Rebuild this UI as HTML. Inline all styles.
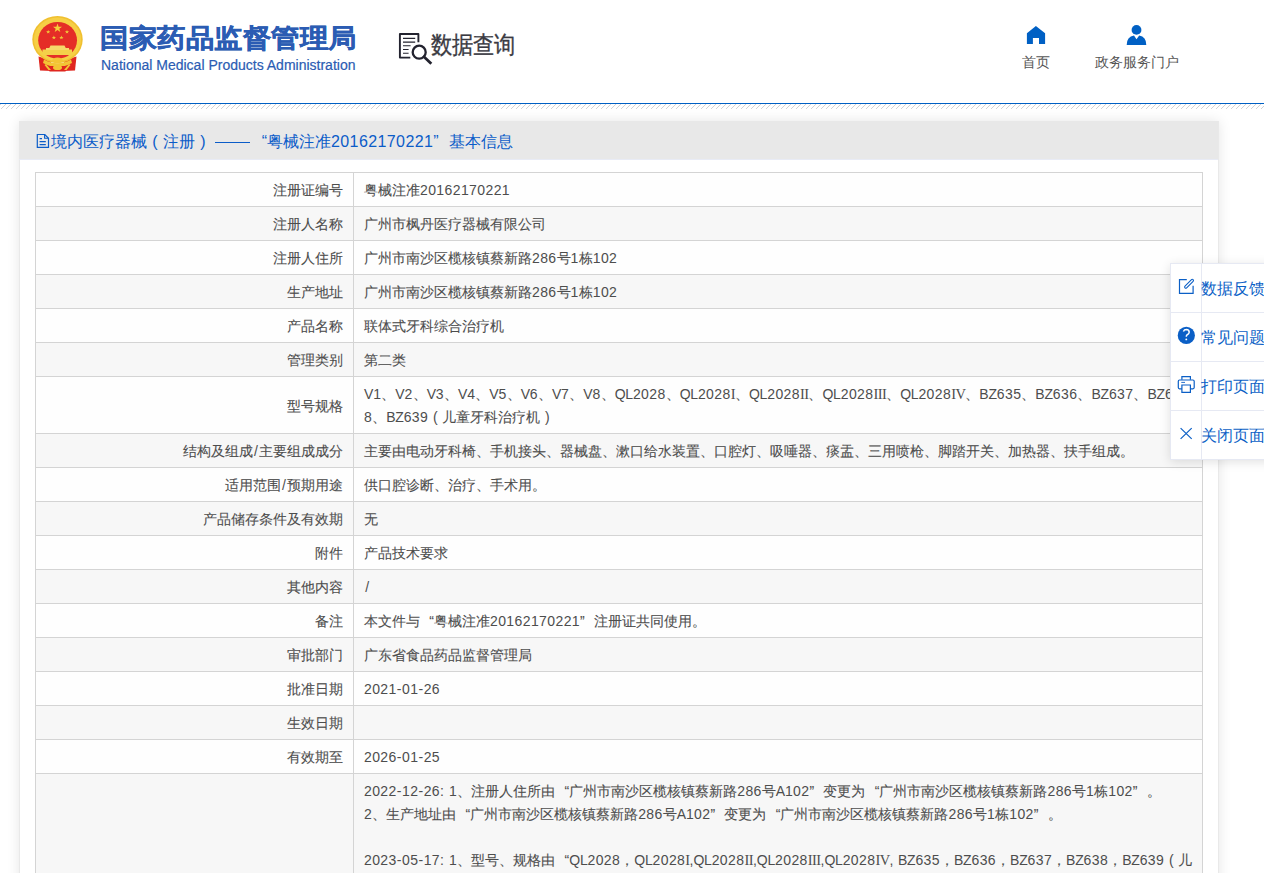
<!DOCTYPE html>
<html><head><meta charset="utf-8">
<style>
*{margin:0;padding:0;box-sizing:border-box}
html,body{width:1264px;height:873px;overflow:hidden;background:#fff;font-family:"Liberation Sans",sans-serif}
#hdr{position:absolute;left:0;top:0;width:1264px;height:103px;background:#fff}
#bl{position:absolute;left:0;top:103px;width:1264px;height:1px;background:#0060c4}
#hatch{position:absolute;left:0;top:104px;width:1264px;height:5px}
#emb{position:absolute;left:28px;top:12px;width:60px;height:62px}
#t1{position:absolute;left:100px;top:21px;font-size:28px;font-weight:bold;color:#2b5cb3;white-space:nowrap;letter-spacing:0.5px;transform:scaleY(0.92);transform-origin:0 4px;-webkit-text-stroke:0.5px #2b5cb3}
#t2{position:absolute;left:101px;top:57px;font-size:14px;color:#2b5cb3;white-space:nowrap;-webkit-text-stroke:0.2px #2b5cb3}
#sq{position:absolute;left:396px;top:30px;width:38px;height:36px}
#sqt{position:absolute;left:431px;top:29px;font-size:21px;color:#3a3a42;white-space:nowrap;transform:scaleY(1.13);transform-origin:0 0;-webkit-text-stroke:0.3px #3a3a42}
.nav{position:absolute;top:54px;font-size:14px;color:#555;white-space:nowrap}
.ico{position:absolute}
#box{position:absolute;left:19px;top:121px;width:1200px;height:900px;background:#fff;border:1px solid #e9e9e9;box-shadow:0 0 12px rgba(0,0,0,.1)}
#bar{position:absolute;left:-1px;top:-1px;width:1199px;height:39px;background:#e8e8e8;border-bottom:1px solid #e8ebf5;color:#0b5cc8;font-size:16px;white-space:nowrap}
#bar>span{position:absolute;top:11px}
.fp{display:inline-block;width:16px;text-align:center}
table{position:absolute;left:15px;top:50px;width:1168px;border-collapse:collapse;table-layout:fixed;font-size:14px;color:#4d4d4d;-webkit-text-stroke:0.1px #4d4d4d}
td{border:1px solid #d4d4d4;background:#fefefe;padding:6px 10px 4px;line-height:23px;vertical-align:middle;white-space:nowrap}
td.l{text-align:right;width:318px}
tr:nth-child(even) td{background:#f7f7f7}
i{font-style:normal;-webkit-text-stroke:0}
.fw{display:inline-block;width:14px;text-align:center;-webkit-text-stroke:0}
.d{letter-spacing:0.4px}
.a{letter-spacing:-0.2px}
.r{letter-spacing:-0.6px;font-family:"Liberation Serif",serif;font-size:14.5px}
.h{letter-spacing:0.6px}
.p{letter-spacing:0px}
.s{margin:0 1.2px}
.lq,.rq{display:inline-block;width:14px}
.lq{text-align:right}
.rq{text-align:left}
#side{position:absolute;left:1170px;top:263px;width:120px;height:197px;background:#fff;border:1px solid #e6e9f3;box-shadow:0 2px 10px rgba(0,0,0,.12)}
#sin{position:absolute;left:-1px;top:-1px;width:120px;height:197px}
.si{position:absolute;left:0;width:120px;height:49px}
.hl{position:absolute;left:0;width:120px;height:1px;background:#e6e9f3}
.si .tx{position:absolute;left:31px;top:16px;font-size:16px;color:#0b5fc6;white-space:nowrap}
#sdiv{position:absolute;left:31px;top:0;width:1px;height:196px;background:#e6e9f3}
</style></head><body>
<div id="hdr">
  <svg id="emb" viewBox="28 12 60 62">
    <path d="M38.5 56.5 L50.5 60 L52 71 L40 70.5 Z" fill="#e0261f"/>
    <path d="M76.5 56.5 L64.5 60 L63 71 L75 70.5 Z" fill="#e0261f"/>
    <ellipse cx="57.5" cy="39.5" rx="25.2" ry="23.5" fill="#f0c030"/>
    <ellipse cx="57.5" cy="39.5" rx="23.5" ry="22" fill="#f6cf45"/>
    <ellipse cx="57.6" cy="40.3" rx="19.4" ry="18.4" fill="#e52d27"/>
    <path d="M44 59.5 Q57.5 67 71 59.5 L72 63 Q57.5 71 43 63 Z" fill="#f3c535"/>
    <path d="M48 66 H67 L65.5 71.5 H49.5 Z" fill="#e0261f"/>
    <ellipse cx="57.5" cy="60.5" rx="5.5" ry="3" fill="#f3c535"/>
    <ellipse cx="57.5" cy="67.5" rx="4.5" ry="2.6" fill="#f3c535"/>
    <path d="M46 64 L51 70 L48.5 70 L44.5 65 Z M69 64 L64 70 L66.5 70 L70.5 65 Z" fill="#f3c535"/>
    <polygon points="57.5,23.5 58.6,26.8 62,26.8 59.3,28.8 60.3,32 57.5,30 54.7,32 55.7,28.8 53,26.8 56.4,26.8" fill="#f5d03a"/>
    <polygon points="48.2,29.9 48.8,31.3 50.3,31.3 49.1,32.2 49.5,33.6 48.2,32.7 46.9,33.6 47.3,32.2 46.1,31.3 47.6,31.3" fill="#f0c93a"/>
    <polygon points="67,29.9 67.6,31.3 69.1,31.3 67.9,32.2 68.3,33.6 67,32.7 65.7,33.6 66.1,32.2 64.9,31.3 66.4,31.3" fill="#f0c93a"/>
    <polygon points="53.9,35.6 54.5,37 56,37 54.8,37.9 55.2,39.3 53.9,38.4 52.6,39.3 53,37.9 51.8,37 53.3,37" fill="#f0c93a"/>
    <polygon points="61.4,35.6 62,37 63.5,37 62.3,37.9 62.7,39.3 61.4,38.4 60.1,39.3 60.5,37.9 59.3,37 60.8,37" fill="#f0c93a"/>
    <path d="M50.5 45.5 H64.5 L66 48.5 H49 Z" fill="#f6d86a"/>
    <rect x="42.5" y="49.5" width="29.5" height="5.5" fill="#f4d04a"/>
    <rect x="46" y="48" width="23" height="2" fill="#f6d86a"/>
  </svg>
  <div id="t1">国家药品监督管理局</div>
  <div id="t2">National Medical Products Administration</div>
  <svg id="sq" viewBox="396 30 38 36">
    <path d="M418.4 42.3 V34 H399.9 V57.6 H410.3" fill="none" stroke="#23232f" stroke-width="1.9" stroke-linejoin="round"/>
    <path d="M403 38.4 H415.2 M403 42.1 H415.2 M403 45.8 H410.6 M403 49.5 H408.6 M403 53.2 H408.6" stroke="#23232f" stroke-width="1.1"/>
    <circle cx="419.2" cy="52.2" r="6.5" fill="#fff" stroke="#23232f" stroke-width="2.3"/>
    <path d="M424.2 57 L430.3 62.8" stroke="#23232f" stroke-width="2.8" stroke-linecap="square"/>
  </svg>
  <div id="sqt">数据查询</div>
  <svg class="ico" style="left:1020px;top:20px" width="30" height="30" viewBox="1020 20 30 30"><path d="M1026.9 33.2 L1035.9 25.9 L1045.1 33.2 V44 H1039 V38 H1032.9 V44 H1026.9 Z" fill="#0060c4"/></svg>
  <svg class="ico" style="left:1120px;top:20px" width="32" height="30" viewBox="1120 20 32 30"><circle cx="1136.5" cy="29.9" r="4.9" fill="#0060c4"/><path d="M1126.7 44.9 Q1126.7 36.5 1134 35.4 L1136.5 39.2 L1139.2 35.4 Q1146.3 36.5 1146.3 44.9 Z" fill="#0060c4"/></svg>
  <div class="nav" style="left:1022px">首页</div>
  <div class="nav" style="left:1095px">政务服务门户</div>
</div>
<div id="bl"></div>
<svg id="hatch" width="1264" height="5"><defs><pattern id="hp" x="1" width="5" height="5" patternUnits="userSpaceOnUse"><path d="M0 5L5 0" stroke="#cfcfcf" stroke-width="0.9"/></pattern></defs><rect width="1264" height="5" fill="url(#hp)"/></svg>
<div id="box">
  <div id="bar">
    <svg style="position:absolute;left:17px;top:12px" width="14" height="16" viewBox="36 133 14 16"><path d="M37.3 134.5 H44.8 L48.5 138.3 V147.3 H37.3 Z" fill="none" stroke="#0b5cc8" stroke-width="1.2"/><path d="M44.6 134.5 V138.3 H48.5" fill="none" stroke="#0b5cc8" stroke-width="1.1"/><path d="M39.6 138.6 H42 M39.6 141.6 H45.8 M39.6 144.6 H45.8" stroke="#0b5cc8" stroke-width="1.2"/></svg>
    <span style="left:32px">境内医疗器械<span class="fp" style="position:static">(</span>注册<span class="fp" style="position:static">)</span></span>
    <div style="position:absolute;left:196px;top:21px;width:35px;height:1.3px;background:#0b5cc8"></div>
    <span style="left:232px"><span class="lq" style="width:16px">“</span>粤械注准<i class="d">20162170221</i><span class="rq" style="width:16px">”</span>基本信息</span>
  </div>
  <table>
<tr><td class="l">注册证编号</td><td>粤械注准<i class="d">20162170221</i></td></tr>
<tr><td class="l">注册人名称</td><td>广州市枫丹医疗器械有限公司</td></tr>
<tr><td class="l">注册人住所</td><td>广州市南沙区榄核镇蔡新路<i class="d">286</i>号<i class="d">1</i>栋<i class="d">102</i></td></tr>
<tr><td class="l">生产地址</td><td>广州市南沙区榄核镇蔡新路<i class="d">286</i>号<i class="d">1</i>栋<i class="d">102</i></td></tr>
<tr><td class="l">产品名称</td><td>联体式牙科综合治疗机</td></tr>
<tr><td class="l">管理类别</td><td>第二类</td></tr>
<tr><td class="l">型号规格</td><td><i class="a">V</i><i class="d">1</i>、<i class="a">V</i><i class="d">2</i>、<i class="a">V</i><i class="d">3</i>、<i class="a">V</i><i class="d">4</i>、<i class="a">V</i><i class="d">5</i>、<i class="a">V</i><i class="d">6</i>、<i class="a">V</i><i class="d">7</i>、<i class="a">V</i><i class="d">8</i>、<i class="a">QL</i><i class="d">2028</i>、<i class="a">QL</i><i class="d">2028</i><i class="r">I</i>、<i class="a">QL</i><i class="d">2028</i><i class="r">II</i>、<i class="a">QL</i><i class="d">2028</i><i class="r">III</i>、<i class="a">QL</i><i class="d">2028</i><i class="r">IV</i>、<i class="a">BZ</i><i class="d">635</i>、<i class="a">BZ</i><i class="d">636</i>、<i class="a">BZ</i><i class="d">637</i>、<i class="a">BZ</i><i class="d">63</i><br><i class="d">8</i>、<i class="a">BZ</i><i class="d">639</i><span class="fw">(</span>儿童牙科治疗机<span class="fw">)</span></td></tr>
<tr><td class="l">结构及组成<i class="s">/</i>主要组成成分</td><td>主要由电动牙科椅、手机接头、器械盘、漱口给水装置、口腔灯、吸唾器、痰盂、三用喷枪、脚踏开关、加热器、扶手组成。</td></tr>
<tr><td class="l">适用范围<i class="s">/</i>预期用途</td><td>供口腔诊断、治疗、手术用。</td></tr>
<tr><td class="l">产品储存条件及有效期</td><td>无</td></tr>
<tr><td class="l">附件</td><td>产品技术要求</td></tr>
<tr><td class="l">其他内容</td><td><i class="s">/</i></td></tr>
<tr><td class="l">备注</td><td>本文件与<span class="lq">“</span>粤械注准<i class="d">20162170221</i><span class="rq">”</span>注册证共同使用。</td></tr>
<tr><td class="l">审批部门</td><td>广东省食品药品监督管理局</td></tr>
<tr><td class="l">批准日期</td><td><i class="d">2021</i><i class="h">-</i><i class="d">01</i><i class="h">-</i><i class="d">26</i></td></tr>
<tr><td class="l">生效日期</td><td></td></tr>
<tr><td class="l">有效期至</td><td><i class="d">2026</i><i class="h">-</i><i class="d">01</i><i class="h">-</i><i class="d">25</i></td></tr>
<tr><td class="l"></td><td><i class="d">2022</i><i class="h">-</i><i class="d">12</i><i class="h">-</i><i class="d">26</i><i class="h">: </i><i class="d">1</i>、注册人住所由<span class="lq">“</span>广州市南沙区榄核镇蔡新路<i class="d">286</i>号<i class="a">A</i><i class="d">102</i><span class="rq">”</span>变更为<span class="lq">“</span>广州市南沙区榄核镇蔡新路<i class="d">286</i>号<i class="d">1</i>栋<i class="d">102</i><span class="rq">”</span>。<br><i class="d">2</i>、生产地址由<span class="lq">“</span>广州市南沙区榄核镇蔡新路<i class="d">286</i>号<i class="a">A</i><i class="d">102</i><span class="rq">”</span>变更为<span class="lq">“</span>广州市南沙区榄核镇蔡新路<i class="d">286</i>号<i class="d">1</i>栋<i class="d">102</i><span class="rq">”</span>。<br><br><i class="d">2023</i><i class="h">-</i><i class="d">05</i><i class="h">-</i><i class="d">17</i><i class="h">: </i><i class="d">1</i>、型号、规格由<span class="lq">“</span><i class="a">QL</i><i class="d">2028</i>，<i class="a">QL</i><i class="d">2028</i><i class="r">I</i><i class="p">,</i><i class="a">QL</i><i class="d">2028</i><i class="r">II</i><i class="p">,</i><i class="a">QL</i><i class="d">2028</i><i class="r">III</i><i class="p">,</i><i class="a">QL</i><i class="d">2028</i><i class="r">IV</i><i class="p">,</i><i class="h"> </i><i class="a">BZ</i><i class="d">635</i>，<i class="a">BZ</i><i class="d">636</i>，<i class="a">BZ</i><i class="d">637</i>，<i class="a">BZ</i><i class="d">638</i>，<i class="a">BZ</i><i class="d">639</i><span class="fw">(</span>儿<br>童牙科治疗机<span class="fw">)</span><span class="rq">”</span></td></tr>
</table>
</div>
<div id="side"><div id="sin">
  <div id="sdiv"></div>
  <div class="hl" style="top:49px"></div>
  <div class="hl" style="top:98px"></div>
  <div class="hl" style="top:147px"></div>
  <div class="si" style="top:0">
    <svg class="ico" style="left:6px;top:13px" width="20" height="20" viewBox="1176 276 20 20"><path d="M1186.8 279.6 H1179.5 V293.3 H1193.1 V285.8" fill="none" stroke="#0b5fc6" stroke-width="1.2"/><path d="M1185.8 287 L1192.3 280.5" stroke="#0b5fc6" stroke-width="3.4" stroke-linecap="round"/><path d="M1185.8 287 L1192.3 280.5" stroke="#fff" stroke-width="1.2" stroke-linecap="round"/></svg>
    <div class="tx" style="top:16px">数据反馈</div>
  </div>
  <div class="si" style="top:49px">
    <svg class="ico" style="left:6px;top:13px" width="20" height="20" viewBox="1176 325 20 20"><circle cx="1186.3" cy="335.4" r="8.6" fill="#0b5fc6"/><path d="M1183.4 331.5 Q1184.2 329.6 1186.4 329.6 Q1189.2 329.8 1189.2 332.2 Q1189.1 333.9 1187.3 334.7 Q1186.3 335.3 1186.3 336.8" fill="none" stroke="#fff" stroke-width="1.5"/><circle cx="1186.3" cy="339.4" r="0.95" fill="#fff"/></svg>
    <div class="tx" style="top:16px">常见问题</div>
  </div>
  <div class="si" style="top:98px">
    <svg class="ico" style="left:6px;top:13px" width="20" height="20" viewBox="1176 374 20 20"><path d="M1181.9 379.8 V376.6 H1190.4 V379.8" fill="none" stroke="#0b5fc6" stroke-width="1.2"/><path d="M1181.9 388.8 H1179.5 Q1178.3 388.8 1178.3 387.6 V381.2 Q1178.3 380 1179.5 380 H1192.9 Q1194.2 380 1194.2 381.2 V387.6 Q1194.2 388.8 1192.9 388.8 H1190.4" fill="none" stroke="#0b5fc6" stroke-width="1.2"/><path d="M1181.9 385 H1190.4 V392.3 H1181.9 Z" fill="none" stroke="#0b5fc6" stroke-width="1.2"/><path d="M1181.3 382.4 H1185" stroke="#0b5fc6" stroke-width="0.9"/></svg>
    <div class="tx" style="top:16px">打印页面</div>
  </div>
  <div class="si" style="top:147px">
    <svg class="ico" style="left:6px;top:13px" width="20" height="20" viewBox="1176 423 20 20"><path d="M1180.6 428.1 L1191.7 438.9 M1191.7 428.1 L1180.6 438.9" stroke="#0b5fc6" stroke-width="1.2"/></svg>
    <div class="tx" style="top:16px">关闭页面</div>
  </div>
</div></div>
</body></html>
